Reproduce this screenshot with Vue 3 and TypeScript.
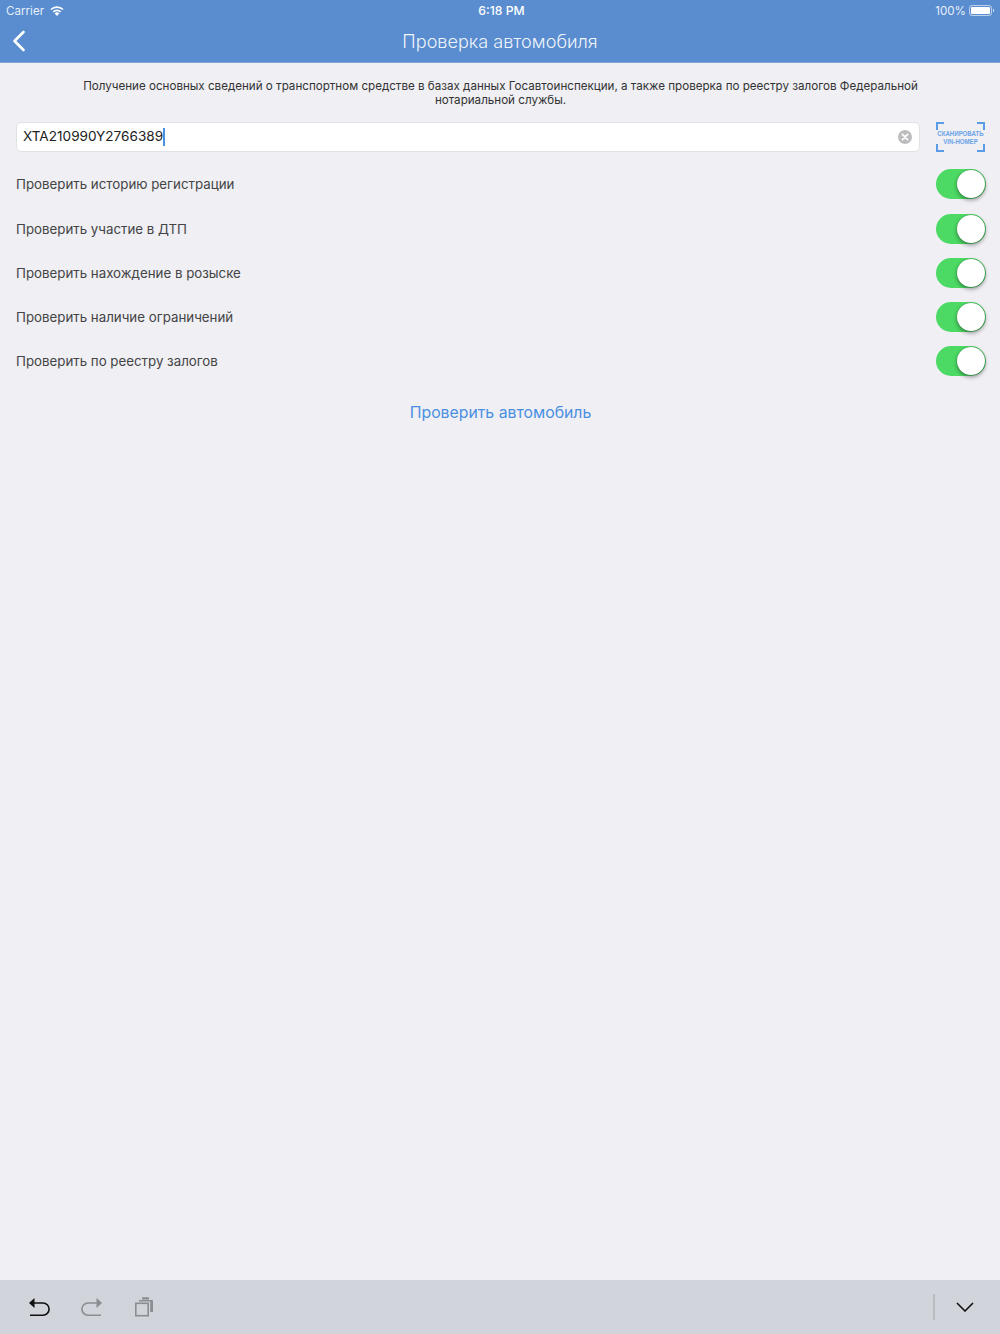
<template>
  <div class="page">
    <header class="head">
      <div class="status">
        <div class="status-left">
          <span>Carrier</span>
          <svg class="wifi" width="14" height="10" viewBox="0 0 14 10">
            <path d="M7 10 4.7 7.5a3.2 3.2 0 0 1 4.6 0Z" fill="#fff" />
            <path d="M3.3 6a5.2 5.2 0 0 1 7.4 0" fill="none" stroke="#fff" stroke-width="1.7" />
            <path d="M1 3.5a8.6 8.6 0 0 1 12 0" fill="none" stroke="#fff" stroke-width="1.7" />
          </svg>
        </div>
        <span class="time">6:18 PM</span>
        <div class="status-right">
          <span>100%</span>
          <svg width="26" height="11" viewBox="0 0 26 11">
            <rect x="0.5" y="0.5" width="22" height="10" rx="2.5" fill="none" stroke="#fff" stroke-opacity="0.6" />
            <rect x="2" y="2" width="19" height="7" rx="1" fill="#fff" />
            <path d="M24 3.8c.8.2 1.2.8 1.2 1.7s-.4 1.5-1.2 1.7Z" fill="#fff" fill-opacity="0.7" />
          </svg>
        </div>
      </div>
      <div class="nav">
        <svg class="back" width="14" height="22" viewBox="0 0 14 22">
          <path d="M11.5 2 2.5 11l9 9" fill="none" stroke="#fff" stroke-width="2.6" stroke-linecap="round" stroke-linejoin="round" />
        </svg>
        <span class="title">Проверка автомобиля</span>
      </div>
    </header>

    <main class="body">
      <p class="lead">
        Получение основных сведений о транспортном средстве в базах данных Госавтоинспекции, а также проверка по реестру залогов Федеральной нотариальной службы.
      </p>

      <div class="vin-line">
        <div class="vin-input">
          <span class="vin-text">{{ vin }}</span>
          <i class="caret"></i>
          <svg class="clear" width="14" height="14" viewBox="0 0 14 14">
            <circle cx="7" cy="7" r="7" fill="#bdbdc0" />
            <path d="M4.4 4.4l5.2 5.2M9.6 4.4 4.4 9.6" stroke="#fff" stroke-width="1.7" stroke-linecap="round" />
          </svg>
        </div>
        <div class="scan">
          <i class="corner tl"></i>
          <i class="corner tr"></i>
          <i class="corner bl"></i>
          <i class="corner br"></i>
          <span>СКАНИРОВАТЬ</span>
          <span>VIN-НОМЕР</span>
        </div>
      </div>

      <ul class="checks">
        <li v-for="item in checks" :key="item">
          <span>{{ item }}</span>
          <div class="switch"><i></i></div>
        </li>
      </ul>

      <div class="submit">Проверить автомобиль</div>
    </main>

    <footer class="kb">
      <div class="kb-left">
        <svg width="22" height="22" viewBox="0 0 22 22">
          <path d="M0 7l5.5-5v10Z" fill="#111" />
          <path d="M4 7h10a6.1 6.1 0 0 1 0 12.2H1" fill="none" stroke="#111" stroke-width="1.6" />
        </svg>
        <svg width="24" height="22" viewBox="0 0 24 22">
          <path d="M21 7l-5.5-5v10Z" fill="#8a8d91" />
          <path d="M17 7H7a6.1 6.1 0 0 0 0 12.2h13" fill="none" stroke="#8a8d91" stroke-width="1.6" />
        </svg>
        <svg width="19" height="22" viewBox="0 0 19 22">
          <rect x="0.8" y="7.3" width="12.4" height="12.4" fill="none" stroke="#8a8d91" stroke-width="1.6" />
          <path d="M4 5.5V4h13a1 1 0 0 1 1 1v11h-2.8V5.5Z" fill="#8a8d91" />
          <path d="M7 3.5V2a.8.8 0 0 1 .8-.8h5.4a.8.8 0 0 1 .8.8v1.5Z" fill="#8a8d91" />
        </svg>
      </div>
      <div class="kb-right">
        <i class="divider"></i>
        <svg width="18" height="10" viewBox="0 0 18 10">
          <path d="M1 1l8 8 8-8" fill="none" stroke="#111" stroke-width="1.6" />
        </svg>
      </div>
    </footer>
  </div>
</template>

<script setup lang="ts">
const vin = "XTA210990Y2766389";

const checks: string[] = [
  "Проверить историю регистрации",
  "Проверить участие в ДТП",
  "Проверить нахождение в розыске",
  "Проверить наличие ограничений",
  "Проверить по реестру залогов",
];
</script>

<style scoped>
.page {
  display: flex;
  flex-direction: column;
  height: 1334px;
  overflow: hidden;
  background: #efeff4;
  color: #333;
  font-family: "Inter", "Noto Sans", "Liberation Sans", sans-serif;
}

.head {
  height: 63px;
  background: #5a8dcf;
  color: #fff;
  flex: none;
  box-shadow: inset 0 -1px 0 #7fa5d6;
}

.status {
  display: grid;
  grid-template-columns: 1fr auto 1fr;
  align-items: center;
  height: 21px;
  padding: 0 6px;
  font-size: 11.6px;
  color: rgba(255, 255, 255, 0.88);
}

.status-left {
  display: flex;
  align-items: center;
  gap: 6px;
}

.status-right {
  display: flex;
  justify-content: flex-end;
  align-items: center;
  gap: 3px;
  margin-right: -1px;
}

.time {
  margin-left: 3px;
  color: #fff;
  font-size: 12.2px;
  font-weight: 500;
}

.nav {
  position: relative;
  display: flex;
  align-items: center;
  justify-content: center;
  height: 41px;
  padding-bottom: 2px;
  box-sizing: border-box;
}

.back {
  position: absolute;
  left: 12px;
  top: 9px;
}

.title {
  font-size: 18.1px;
  font-weight: 300;
  color: rgba(255, 255, 255, 0.92);
}

.body {
  flex: 1;
  padding: 0 15px 0 16px;
}

.lead {
  margin: 16px 60px 0;
  font-size: 11.62px;
  line-height: 14px;
  text-align: center;
  color: #333;
}

.vin-line {
  display: flex;
  align-items: center;
  margin-top: 15px;
  gap: 16px;
}

.vin-input {
  flex: 1;
  display: flex;
  align-items: center;
  height: 30px;
  box-sizing: border-box;
  padding: 0 7px 0 6px;
  background: #fff;
  border: 1px solid #e2e2e6;
  border-radius: 5px;
  color: #222;
  font-size: 13.6px;
}

.vin-text {
  position: relative;
  top: -1px;
}

.caret {
  width: 2px;
  height: 18px;
  background: #4a90e2;
}

.clear {
  margin-left: auto;
}

.scan {
  position: relative;
  display: flex;
  flex-direction: column;
  align-items: center;
  justify-content: center;
  width: 49px;
  height: 30px;
  padding-top: 1px;
  box-sizing: border-box;
  flex: none;
  color: #6ba3e8;
  font-family: "Liberation Sans", sans-serif;
  font-size: 6.1px;
  font-weight: 700;
  line-height: 8px;
}

.scan span {
  transform: scaleY(1.2);
}

.corner {
  position: absolute;
  width: 6px;
  height: 6px;
  border: 0 solid #5b9ce6;
}

.corner.tl { left: 0; top: 0; border-width: 2px 0 0 2px; }
.corner.tr { right: 0; top: 0; border-width: 2px 2px 0 0; }
.corner.bl { left: 0; bottom: 0; border-width: 0 0 2px 2px; }
.corner.br { right: 0; bottom: 0; border-width: 0 2px 2px 0; }

.checks {
  list-style: none;
  margin: 10.3px 0 0;
  padding: 0;
  font-size: 13.3px;
}

.checks li {
  display: flex;
  justify-content: space-between;
  align-items: center;
  height: 44.25px;
  color: #444;
}

.switch {
  position: relative;
  width: 50px;
  height: 30px;
  margin-right: -1px;
  border-radius: 15px;
  background: linear-gradient(90deg, #4cd964 70%, #45c85c);
}

.switch i {
  position: absolute;
  right: 1px;
  top: 1px;
  width: 28px;
  height: 28px;
  border-radius: 50%;
  background: #fff;
  box-shadow: 0 2px 4px rgba(0, 0, 0, 0.4), 0 0 1px rgba(0, 0, 0, 0.4);
}

.submit {
  margin-top: 19px;
  text-align: center;
  font-size: 15.8px;
  color: #4a90e2;
}

.kb {
  display: flex;
  justify-content: space-between;
  align-items: center;
  height: 54px;
  flex: none;
  background: #d1d5db;
  padding: 0 26px 0 29px;
}

.kb-left {
  display: flex;
  align-items: center;
  gap: 30px;
}

.kb-right {
  display: flex;
  align-items: center;
  gap: 21px;
}

.divider {
  width: 2px;
  height: 26px;
  background: #b9bcc1;
}
</style>
